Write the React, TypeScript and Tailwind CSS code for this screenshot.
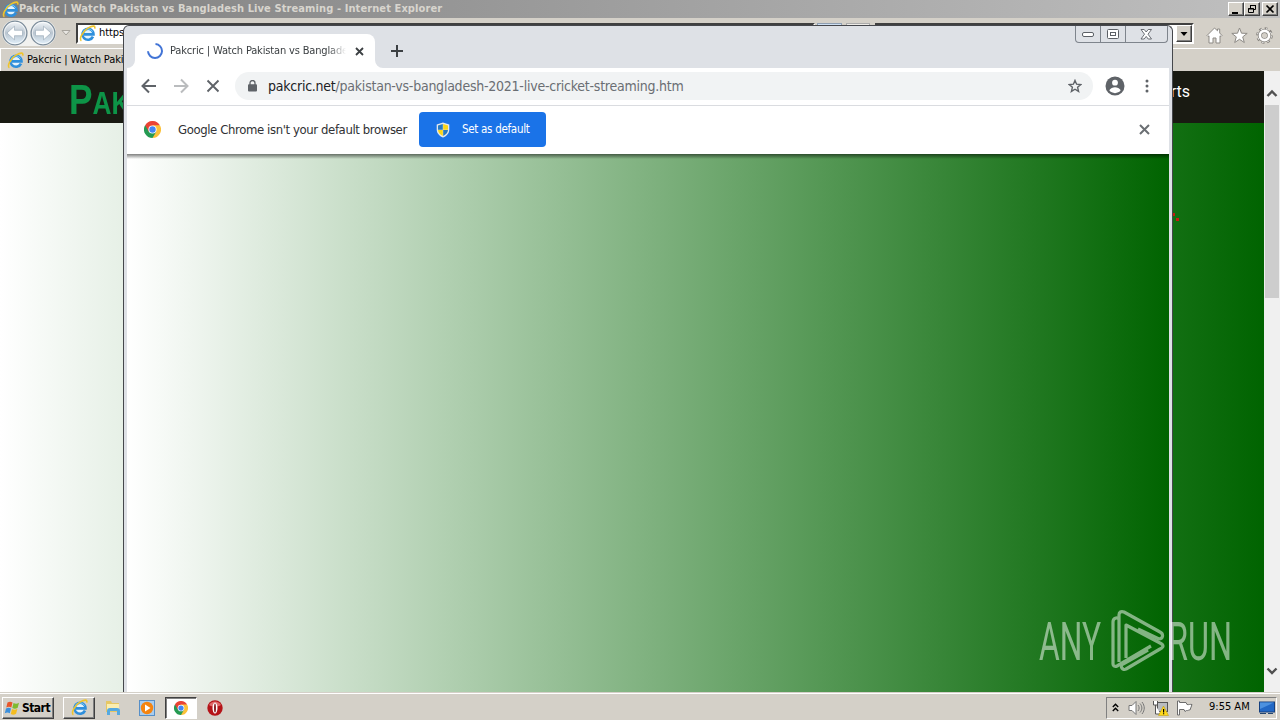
import type { ReactNode } from 'react'

const TITLE = 'Pakcric | Watch Pakistan vs Bangladesh Live Streaming'

function IeIcon({ size = 17 }: { size?: number }) {
  return (
    <svg width={size} height={size} viewBox="0 0 17 17" fill="none" className="shrink-0">
      <circle cx="9" cy="9" r="4.5" fill="#e4f3fc" />
      <path d="M14 11.6A5.5 5.5 0 1 1 14.5 9.4H5" stroke="#2f8fdc" strokeWidth="2.6" />
      <path d="M4 7.5A5.2 5.2 0 0 1 13.6 6.6" stroke="#7dcbf7" strokeWidth="1" />
      <path d="M2.4 15.8C-.4 14.4 3.5 6.2 9.3 2.9 13.6.4 16.8.5 15.6 3.6" stroke="#efc42c" strokeWidth="1.6" />
    </svg>
  )
}

function ChromeIcon({ size = 17 }: { size?: number }) {
  return (
    <svg width={size} height={size} viewBox="0 0 48 48" className="shrink-0">
      <path d="M24 24 3.2 12A24 24 0 0 1 44.8 12Z" fill="#ea4335" />
      <path d="M24 24 44.8 12A24 24 0 0 1 24 48Z" fill="#fbc13a" />
      <path d="M24 24V48A24 24 0 0 1 3.2 12Z" fill="#259a52" />
      <path d="M24 12H44.8L34.4 30Z" fill="#fbc13a" />
      <path d="M34.4 30 24 48 13.6 30Z" fill="#259a52" />
      <path d="M13.6 30 3.2 12 24 12Z" fill="#ea4335" />
      <circle cx="24" cy="24" r="11.5" fill="#fff" />
      <circle cx="24" cy="24" r="9" fill="#4285f4" />
    </svg>
  )
}

function NavOrb({ back }: { back?: boolean }) {
  return (
    <svg width="26" height="26" viewBox="0 0 26 26" className="shrink-0">
      <defs>
        <linearGradient id="orb" x1="0" y1="0" x2="0" y2="1">
          <stop offset="0" stopColor="#f4f7fa" />
          <stop offset=".5" stopColor="#b9c5d0" />
          <stop offset="1" stopColor="#e3f1fb" />
        </linearGradient>
      </defs>
      <circle cx="13" cy="13" r="11.9" fill="url(#orb)" stroke="#7c8c9a" strokeWidth="1.3" />
      <circle cx="13" cy="13" r="10.7" fill="none" stroke="#fff" strokeOpacity=".7" />
      <g transform={back ? undefined : 'matrix(-1 0 0 1 26 0)'}>
        <path d="M5 13 12.5 6.2v4.1H20.500v5.400H12.500v4.100Z" fill="#fff" stroke="#93a4b3" strokeWidth=".6" />
      </g>
    </svg>
  )
}

function ClassicButton({ children, className = '' }: { children: ReactNode; className?: string }) {
  return (
    <div className={`flex items-center justify-center bg-[#d4d0c8] border border-t-white border-l-white border-r-[#404040] border-b-[#404040] shadow-[inset_-1px_-1px_0_#808080] ${className}`}>
      {children}
    </div>
  )
}

function IeTitleBar() {
  return (
    <div className="flex h-[18px] items-center bg-linear-to-r from-[#808080] to-[#c0c0c0] pl-[2px] pr-[2px]">
      <IeIcon />
      <span className="grow font-[DejaVu_Sans_Condensed,sans-serif] text-[11px] font-bold leading-[18px] tracking-[0.1px] text-[#d8d5ce] whitespace-nowrap">
        {TITLE} - Internet Explorer
      </span>
      <ClassicButton className="h-[14px] w-4">
        <svg width="10" height="10"><path d="M1 8h6v2H1z" /></svg>
      </ClassicButton>
      <ClassicButton className="h-[14px] w-4">
        <svg width="10" height="10" fill="none" stroke="#000"><path d="M3.5 4V1.5h5v4H7M3 1.5h6" /><path d="M1.5 4.5h5v4h-5zM1 5h6" /></svg>
      </ClassicButton>
      <ClassicButton className="ml-[2px] h-[14px] w-4">
        <svg width="10" height="10" stroke="#000" strokeWidth="1.7"><path d="m1.5 1.5 7 7M8.5 1.5l-7 7" /></svg>
      </ClassicButton>
    </div>
  )
}

function IeToolbar() {
  return (
    <div className="flex h-[30px] items-center pl-[2px] pr-[6px]">
      <div className="flex gap-[2px] rounded-full bg-[#f1f1ef]">
        <NavOrb back />
        <NavOrb />
      </div>
      <svg width="10" height="6" className="ml-[5px]"><path d="M1 .5h8l-4 4.5Z" fill="#e8e6e2" stroke="#a6a39c" /></svg>
      <div className="ml-[5px] mt-[1px] flex h-[21px] w-[739px] items-center border-2 border-[#404040] border-r-white border-b-white bg-white pl-[1px]">
        <IeIcon />
        <span className="ml-[3px] font-[DejaVu_Sans_Condensed,sans-serif] text-[11px] tracking-[-0.1px] text-black">https://pakcric.net/</span>
      </div>
      <div className="ml-[2px] h-[21px] w-[25px] border border-[#8f9fb2] bg-[#cfe0f3]" />
      <div className="ml-[4px] h-[21px] w-[24px] border border-[#aaa] bg-[#eeece8]" />
      <div className="ml-[5px] mt-[1px] flex h-[21px] w-[319px] justify-end border-2 border-[#404040] border-r-white border-b-white bg-white">
        <ClassicButton className="h-[17px] w-4">
          <svg width="8" height="4"><path d="M.5 0h7L4 4Z" /></svg>
        </ClassicButton>
      </div>
      <div className="ml-[12px] mt-[4px] flex gap-[8px]">
        <svg width="17" height="17" viewBox="0 0 17 17" fill="#fff" stroke="#8d8a85"><path d="M1 8.5 8.5 1l3 2.8V2h2.2v4L16 8.5l-1 1-1-.7V16h-4v-5H7v5H3V8.8l-1 .7Z" /></svg>
        <svg width="17" height="17" viewBox="0 0 17 17" fill="#fff" stroke="#8d8a85"><path d="m8.5 1 2 5.2 5.7.2-4.5 3.500 1.600 5.600-4.800-3.200-4.800 3.200 1.600-5.600L.8 6.400l5.700-.2Z" /></svg>
        <svg width="17" height="17" viewBox="0 0 17 17" fill="none">
          <circle cx="8.5" cy="8.5" r="6.600" stroke="#85827d" strokeWidth="3.400" strokeDasharray="2.700 2.480" />
          <circle cx="8.5" cy="8.5" r="6.300" stroke="#fff" strokeWidth="2.200" strokeDasharray="1.500 3.450" strokeDashoffset="-.6" />
          <circle cx="8.5" cy="8.5" r="4.600" stroke="#85827d" strokeWidth="4" />
          <circle cx="8.5" cy="8.5" r="4.600" stroke="#fff" strokeWidth="2.600" />
        </svg>
      </div>
    </div>
  )
}

function IeWindow() {
  return (
    <div className="flex h-[692px] flex-col">
      <IeTitleBar />
      <IeToolbar />
      <div className="flex h-[23px] items-center border-t border-l border-white pl-[6px] pt-[1px]">
        <IeIcon />
        <span className="ml-[3px] w-[110px] overflow-hidden whitespace-nowrap font-[DejaVu_Sans_Condensed,sans-serif] text-[11px] tracking-[-0.1px] text-black">{TITLE}</span>
      </div>
      <div className="flex grow">
        <div className="flex w-[1264px] flex-col">
          <div className="flex h-[52px] justify-between bg-[#191a12] pl-[69px] pr-[74px]">
            <span className="h-[52px] origin-left scale-x-[0.82] font-[Liberation_Sans_Narrow,Liberation_Sans,sans-serif] text-[43px] font-bold leading-[56px] text-[#0d9447]">
              P<span className="text-[32px]">AKCRIC</span>
            </span>
            <span className="font-[Roboto,sans-serif] text-base leading-[42px] text-white">Sports</span>
          </div>
          <div className="grow bg-linear-to-r/srgb from-white to-[#006400]" />
        </div>
        <div className="flex w-4 flex-col items-center bg-[#f0f0f0]">
          <svg width="16" height="34" fill="none" stroke="#505050" strokeWidth="2.4"><path d="m3.5 25 4.500-4.500 4.500 4.500" /></svg>
          <div className="h-[193px] w-[14px] bg-[#cdcdcd]" />
          <div className="grow" />
          <svg width="16" height="34" fill="none" stroke="#505050" strokeWidth="2.4"><path d="m3.5 10.500 4.500 4.500 4.500-4.500" /></svg>
        </div>
      </div>
    </div>
  )
}

function TabStrip() {
  return (
    <div className="flex h-[42px] justify-between">
      <div className="flex items-end pl-[3px]">
        <svg width="8" height="8"><path d="M8 0v8H0a8 8 0 0 0 8-8" fill="#fff" /></svg>
        <div className="flex h-[34px] w-[240px] items-center rounded-t-lg bg-white pl-[12px] pr-[11px]">
          <svg width="16" height="16" viewBox="0 0 16 16" fill="none" stroke="#4274d6" strokeWidth="2" className="shrink-0"><path d="M8.500 1A7 7 0 1 1 1 8.300" /></svg>
          <span className="ml-[7px] w-[176px] overflow-hidden whitespace-nowrap font-[DejaVu_Sans_Condensed,sans-serif] text-[11px] tracking-[-0.16px] text-[#3c4043] mask-r-from-90% mask-r-to-100%">{TITLE}</span>
          <svg width="9" height="9" stroke="#3c4043" strokeWidth="1.8" className="ml-auto shrink-0"><path d="m1 1 7 7M8 1 1 8" /></svg>
        </div>
        <svg width="8" height="8"><path d="M0 0v8h8a8 8 0 0 1-8-8" fill="#fff" /></svg>
        <svg width="12" height="12" stroke="#3c4043" strokeWidth="2" className="mb-[11px] ml-[8px]"><path d="M6 0v12M0 6h12" /></svg>
      </div>
      {/* Aero window buttons */}
      <div className="mr-[4px] flex h-[17px] divide-x divide-[#7e848c] rounded-b border border-t-0 border-[#7e848c]">
        <div className="flex w-[25px] items-center justify-center">
          <svg width="13" height="6" fill="#fff" stroke="#5c6066"><rect x=".5" y="1.5" width="11" height="4" rx="1.5" /></svg>
        </div>
        <div className="flex w-[25px] items-center justify-center">
          <svg width="13" height="11" fill="#fff" stroke="#5c6066"><rect x=".5" y=".5" width="11" height="9" rx="1" /><rect x="3.5" y="3.5" width="5" height="3" /></svg>
        </div>
        <div className="flex w-[41px] items-center justify-center">
          <svg width="13" height="11" fill="#fff" stroke="#5c6066" strokeWidth=".9"><path d="M1 .5h3.200l2 2.500 2-2.500h3.300L8 5.200l3.500 4.800H8.200l-2-2.600-2 2.600H1l3.500-4.800Z" /></svg>
        </div>
      </div>
    </div>
  )
}

function AddressRow() {
  return (
    <div className="flex h-[37px] items-center bg-white pl-[14px] pr-[13px] pb-[1px]">
      <svg width="16" height="16" viewBox="0 0 16 16" fill="none" stroke="#5f6368" strokeWidth="2"><path d="M15 8H2M8 1.500 1.500 8 8 14.500" /></svg>
      <svg width="16" height="16" viewBox="0 0 16 16" fill="none" stroke="#babcbe" strokeWidth="2" className="ml-[16px]"><path d="M1 8h13M8 1.500 14.500 8 8 14.500" /></svg>
      <svg width="14" height="14" viewBox="0 0 14 14" stroke="#5f6368" strokeWidth="1.9" className="ml-[17px]"><path d="m1.500 1.500 11 11M12.500 1.500l-11 11" /></svg>
      <div className="ml-[15px] flex h-[28px] w-[858px] items-center rounded-full bg-[#f1f3f4] pl-[13px] pr-[11px]">
        <svg width="9" height="12" viewBox="0 0 9 12" fill="#5f6368"><rect y="4.3" width="9" height="7.2" rx="1" /><path d="M2 5V3a2.500 2.500 0 0 1 5 0v2" fill="none" stroke="#5f6368" strokeWidth="1.3" /></svg>
        <span className="ml-[11px] grow whitespace-nowrap font-[DejaVu_Sans_Condensed,sans-serif] text-sm tracking-[-0.24px] text-[#6a6e73]">
          <span className="text-[#202124]">pakcric.net</span>/pakistan-vs-bangladesh-2021-live-cricket-streaming.htm
        </span>
        <svg width="14" height="14" viewBox="0 0 14 14" fill="none" stroke="#5f6368" strokeWidth="1.4"><path d="m7 1.400 1.600 3.800 4.200.4-3.200 2.700 1 4.100L7 10.200l-3.600 2.200 1-4.100-3.200-2.700 4.200-.4Z" /></svg>
      </div>
      <svg width="20" height="20" viewBox="0 0 20 20" className="ml-[12px]"><circle cx="10" cy="10" r="9.500" fill="#5f6368" /><circle cx="10" cy="6.700" r="2.900" fill="#fff" /><path d="M4.300 14.200c1.100-2 3.600-3 5.700-3s4.600 1 5.700 3a7 7 0 0 1-11.400 0" fill="#fff" /></svg>
      <svg width="4" height="14" fill="#5f6368" className="ml-[20px]"><circle cx="2" cy="2" r="1.5" /><circle cx="2" cy="7" r="1.5" /><circle cx="2" cy="12" r="1.5" /></svg>
    </div>
  )
}

function DefaultBrowserBar() {
  return (
    <div className="flex h-[49px] items-center border-t border-[#dadce0] bg-white pb-[1px] pl-[17px] pr-[19px]">
      <ChromeIcon />
      <span className="ml-[17px] w-[241px] whitespace-nowrap font-[DejaVu_Sans_Condensed,sans-serif] text-[13px] tracking-[-0.39px] text-[#303134]">
        Google Chrome isn't your default browser
      </span>
      <div className="flex h-[35px] w-[127px] items-center rounded bg-[#1a73e8] pl-[17px]">
        <svg width="14" height="16" viewBox="0 0 14 16">
          <path d="M7 .5 13.300 2.500v5c0 3.800-2.500 6.500-6.300 8-3.800-1.500-6.300-4.200-6.300-8v-5Z" fill="#e5e8ec" />
          <path d="M6.800 2v5.700H2V3.500Z" fill="#277bc3" />
          <path d="M7.200 2v5.700H12V3.500Z" fill="#fcd619" />
          <path d="M6.800 8.100V14C4 12.800 2.300 10.800 2 8.100Z" fill="#fcd619" />
          <path d="M7.200 8.100V14C10 12.800 11.700 10.800 12 8.100Z" fill="#277bc3" />
        </svg>
        <span className="ml-[12px] whitespace-nowrap font-[DejaVu_Sans_Condensed,sans-serif] text-[11.5px] tracking-[-0.3px] text-white">Set as default</span>
      </div>
      <svg width="11" height="11" stroke="#6b6f73" strokeWidth="2" className="ml-auto"><path d="m1 1 9 9M10 1l-9 9" /></svg>
    </div>
  )
}

function ChromeWindow() {
  return (
    <div className="absolute left-[123px] top-[25px] flex h-[667px] w-[1050px] flex-col overflow-hidden rounded-t-md border border-b-0 border-[#45474c] bg-[#dee1e6]">
      <TabStrip />
      <div className="mx-[3px] flex grow flex-col">
        <AddressRow />
        <DefaultBrowserBar />
        <div className="grow bg-linear-to-r/srgb from-white to-[#006400]">
          <div className="h-[5px] bg-linear-to-b from-black/50 to-transparent" />
        </div>
      </div>
    </div>
  )
}

function Watermark() {
  return (
    <svg width="200" height="64" viewBox="0 0 200 64" className="absolute left-[1037px] top-[609px] opacity-50" fill="none" stroke="#fff" strokeWidth="3.200" strokeLinejoin="round">
      <g fill="#fff" stroke="none" fontFamily="Roboto" fontSize="53" fontWeight="400">
        <text x="2" y="51" textLength="62" lengthAdjust="spacingAndGlyphs">ANY</text>
        <text x="131" y="51" textLength="64" lengthAdjust="spacingAndGlyphs">RUN</text>
      </g>
      <path d="M82 13V10c-2-2-6-1-6 3v42c0 2 2 3 4 2l34-20M82 53V6c0-3 2-4 5-3l36 20c4 2 3 7-1 7L101 20" />
      <path d="M89 49V16l34 18c4 2 4 4 0 6L89 60c-3 2-7-3-3-5l25-14" />
    </svg>
  )
}

function Taskbar() {
  return (
    <div className="flex h-7 items-center border-t border-[#d4d0c8] bg-[#d4d0c8] pl-[2px] pr-[3px] shadow-[inset_0_1px_0_#fff]">
      <ClassicButton className="mt-[2px] h-[22px] w-[52px] gap-[1px]">
        <svg width="17" height="16" viewBox="0 0 16 16" className="shrink-0">
          <path d="M3 2.500c2-1.300 3.500-1 5 0L6.800 7.500c-1.500-1-3-1.200-5 0Z" fill="#e8562a" />
          <path d="M9 3c1.800 1 3.500 1 5.500-.2L13.200 7.700c-2 1.200-3.500 1.200-5.400.2Z" fill="#7fba2f" />
          <path d="M1.500 8.500c2-1.200 3.500-1 5 0L5.300 13.300c-1.500-1-3-1.200-5 0Z" fill="#3b8fdc" />
          <path d="M7.500 9c1.800 1 3.500 1 5.400-.2l-1.300 4.900c-2 1.200-3.500 1.200-5.300.2Z" fill="#f5bd20" />
        </svg>
        <span className="mr-[2px] font-[DejaVu_Sans_Condensed,sans-serif] text-[12px] font-bold tracking-[-0.5px] text-black">Start</span>
      </ClassicButton>
      <ClassicButton className="ml-[9px] mt-[2px] h-[22px] w-8"><IeIcon /></ClassicButton>
      <svg width="16" height="16" viewBox="0 0 16 16" className="ml-[10px] mt-[2px]">
        <path d="M1 1h5l1 2h7v9H1Z" fill="#e6c765" />
        <path d="M2 4h12v7H2Z" fill="#fbeeb0" />
        <path d="M2 15v-4c0-2 1-3 3-3h7c2 0 3 1 3 3v4h-3v-4H5v4Z" fill="#55a9e0" />
      </svg>
      <svg width="16" height="16" viewBox="0 0 16 16" className="ml-[18px] mt-[2px]">
        <rect x=".5" y=".5" width="15" height="15" fill="#a9cdef" stroke="#568fc8" />
        <circle cx="8" cy="8" r="6.200" fill="#f58410" />
        <path d="M6 4.500 11.500 8 6 11.500Z" fill="#fff" />
      </svg>
      <div className="ml-[10px] mt-[2px] flex h-[22px] w-8 items-center justify-center border border-[#404040] border-r-white border-b-white bg-white shadow-[inset_1px_1px_0_#808080]">
        <ChromeIcon size={14} />
      </div>
      <svg width="16" height="16" viewBox="0 0 16 16" className="ml-[10px] mt-[2px]">
        <circle cx="8" cy="8" r="7.700" fill="#b51318" />
        <path d="M2 5a7 7 0 0 1 12 0c-3 2-9 2-12 0" fill="#e06a6a" />
        <ellipse cx="8" cy="8" rx="2.500" ry="5.500" fill="#fff" />
        <ellipse cx="8" cy="8" rx=".9" ry="4.500" fill="#7c0c10" />
      </svg>
      {/* Notification area */}
      <div className="ml-auto mt-[2px] flex h-[22px] w-[171px] items-center border border-[#808080] border-r-white border-b-white pl-[5px]">
        <svg width="7" height="9" fill="none" stroke="#000" strokeWidth="1.400"><path d="m.8 4 2.700-2.700L6.200 4M.8 8l2.700-2.700L6.200 8" /></svg>
        <svg width="17" height="16" viewBox="0 0 17 16" fill="#fff" stroke="#777" className="ml-[9px]"><path d="M1 5.500h3l4-4v13l-4-4H1Z" /><path d="M10 5c1.500 2 1.500 4 0 6M12 3.500c2.500 3 2.500 6 0 9M14 2c3 4 3 8 0 12" fill="none" /></svg>
        <svg width="17" height="16" viewBox="0 0 17 16" className="ml-[7px]">
          <rect x="5.500" y="2.500" width="10" height="9" fill="#b9bcc0" stroke="#555" />
          <path d="M1.500 1v4h4V1M3.500 5v9h5" fill="#fff" stroke="#555" />
          <path d="m11.500 6 5 9.500h-10Z" fill="#ffd91c" stroke="#b99400" strokeWidth=".5" />
          <path d="M11 9h1.200v3.500H11zM11 13.300h1.200v1H11z" />
        </svg>
        <svg width="17" height="16" viewBox="0 0 17 16" fill="#fff" stroke="#6c6c6c" className="ml-[7px]"><path d="M1.500 1v14h2V9.500h4.500l1 2 1.500-1c1.500.5 2.500-1 3.500-.5L16 4.500c-2-.500-3 .5-5 0l-1-2H3.500V1Z" /></svg>
        <span className="ml-[16px] whitespace-nowrap font-[DejaVu_Sans_Condensed,sans-serif] text-[11px] text-black">9:55 AM</span>
        <svg width="16" height="14" viewBox="0 0 16 14" className="ml-auto mr-[1px]">
          <rect x=".5" y="1" width="15" height="10" fill="#2268c5" stroke="#16407f" />
          <path d="M1 1.500h14L1 8Z" fill="#4c91df" />
          <path d="M1 12.500h6M9 12.500h5" stroke="#24466f" />
        </svg>
      </div>
    </div>
  )
}

export default function App() {
  return (
    <div className="relative h-[720px] w-[1280px] overflow-hidden bg-[#d4d0c8]">
      <IeWindow />
      <Taskbar />
      <svg width="7" height="14" fill="#c51d10" className="absolute left-[1173px] top-[210px]"><path d="M0 3h2v3H0zM3 8h3v3H3z" /></svg>
      <ChromeWindow />
      <Watermark />
    </div>
  )
}
